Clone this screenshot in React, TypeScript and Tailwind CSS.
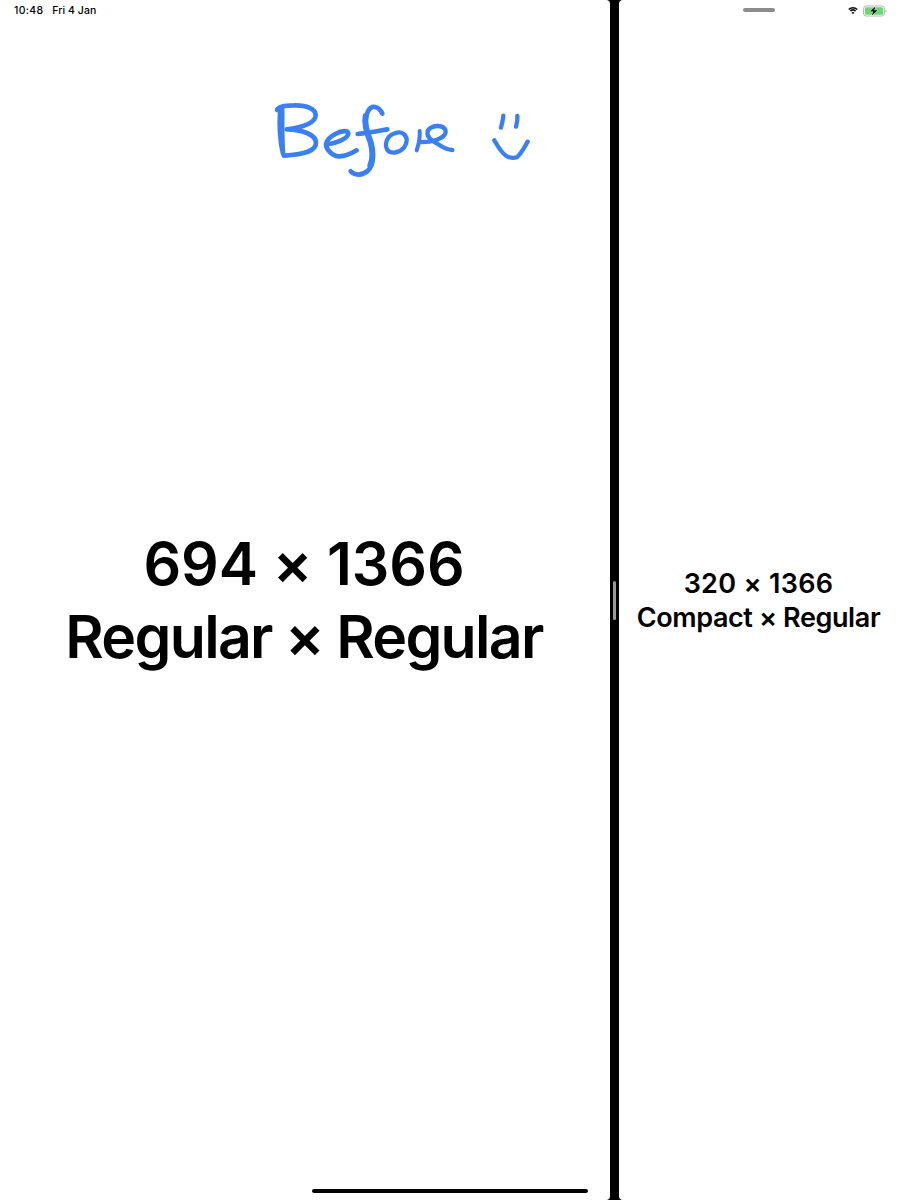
function Handwriting() {
  return (
    <svg
      className="absolute left-[260px] top-[90px]"
      width="290"
      height="100"
      viewBox="0 0 870 300"
      fill="none"
      stroke="#3b7ff5"
      strokeWidth="14"
      strokeLinecap="round"
      strokeLinejoin="round"
    >
      <path d="M51 60C56 49 76 46 102 46C142 45 166 57 167 75C168 96 132 113 80 118C125 119 168 133 168 158C168 183 135 193 72 197" />
      <path d="M58 58C55 102 56 149 67 193L72 196C68 152 69 105 69 58Z" fill="#3b7ff5" strokeWidth="9" />
      <path d="M200 163C230 161 264 145 265 130C263 121 246 121 226 132C203 144 191 161 203 178C220 202 243 209 290 181" />
      <path d="M367 71C357 48 335 43 325 62C309 94 318 121 330 149C343 191 340 225 324 242C306 257 284 258 272 244" />
      <path d="M317 78C312 102 322 132 332 157C339 184 338 210 331 226" strokeWidth="18" />
      <path d="M293 132C323 129 354 123 382 118" />
      <path d="M405 130C384 134 372 159 381 178C391 194 418 189 432 173C443 158 443 141 431 132C423 126 412 127 405 130" strokeWidth="13" />
      <path d="M479 123C481 144 476 163 470 181" strokeWidth="12" />
      <path d="M477 156C509 158 555 148 557 126C557 106 527 104 511 114C497 124 500 141 519 153C542 166 551 178 577 180" strokeWidth="13" />
      <path d="M730 77C729 91 725 103 723 113M772 78C773 91 770 101 768 110" strokeWidth="13" />
      <path d="M703 151C714 169 725 192 743 200C753 204 762 205 770 202C784 191 792 174 803 155" strokeWidth="13" />
    </svg>
  );
}

function WifiIcon() {
  return (
    <svg width="10" height="9" viewBox="0 0 11 9" fill="none" stroke="#111" strokeWidth="1.6">
      <path d="M0.8 3.3a6.7 6.7 0 0 1 9.4 0" />
      <path d="M2.7 5.2a4 4 0 0 1 5.6 0" />
      <path d="M5.5 8.5L3.9 6.9a2.3 2.3 0 0 1 3.2 0z" fill="#111" stroke="none" />
    </svg>
  );
}

function BatteryIcon() {
  return (
    <svg width="24" height="12" viewBox="0 0 24 12">
      <rect x="0.5" y="1" width="21" height="10" rx="2.7" fill="#fff" stroke="#a3a3a3" strokeWidth="0.8" />
      <rect x="1.8" y="2.3" width="18.4" height="7.4" rx="1.5" fill="#6cd673" />
      <path d="M22.5 4.5c1.3.6 1.3 2.4 0 3z" fill="#a3a3a3" />
      <path d="M12.4 1.4L7.1 6.6h3.1L8.9 10.6l5.6-5.3h-3.3z" fill="#000" stroke="#fff" strokeWidth="0.7" paintOrder="stroke" />
    </svg>
  );
}

export default function App() {
  return (
    <div className="relative flex h-[1200px] w-[900px] overflow-hidden bg-black font-['Inter',sans-serif] text-black">
      <main className="flex w-[610px] flex-col rounded-r-[4px] bg-white">
        <header className="flex h-[21px] items-center gap-[9px] pl-[14px] text-[10.5px] font-medium">
          <span className="tracking-[0.3px]">10:48</span>
          <span className="tracking-[0.05px]">Fri 4 Jan</span>
        </header>
        <div className="flex h-[1168px] flex-col items-center pr-[2px] pt-[507px] text-center text-[59px] font-semibold leading-[72.6px]">
          <p className="whitespace-nowrap tracking-[-0.1px]">694 × 1366</p>
          <p className="whitespace-nowrap tracking-[-1.7px]">Regular × Regular</p>
        </div>
        <div className="ml-[312px] h-1 w-[276px] rounded-full bg-black" />
      </main>
      <div className="flex w-[9px] items-center justify-center">
        <div className="h-[39px] w-[3px] rounded-full bg-[#9a9a9a]" />
      </div>
      <aside className="flex flex-1 flex-col rounded-l-[4px] bg-white">
        <header className="flex h-[21px] items-center">
          <div className="mb-px ml-[124px] h-1 w-8 rounded-full bg-[#8c8c8c]" />
          <div className="ml-[73px] flex items-center gap-[5px]">
            <WifiIcon />
            <BatteryIcon />
          </div>
        </header>
        <div className="pr-[2px] pt-[546px] text-center text-[27px] font-semibold leading-[33.6px]">
          <p className="whitespace-nowrap tracking-[0.3px]">320 × 1366</p>
          <p className="whitespace-nowrap tracking-[-0.4px]">Compact × Regular</p>
        </div>
      </aside>
      <Handwriting />
    </div>
  );
}
